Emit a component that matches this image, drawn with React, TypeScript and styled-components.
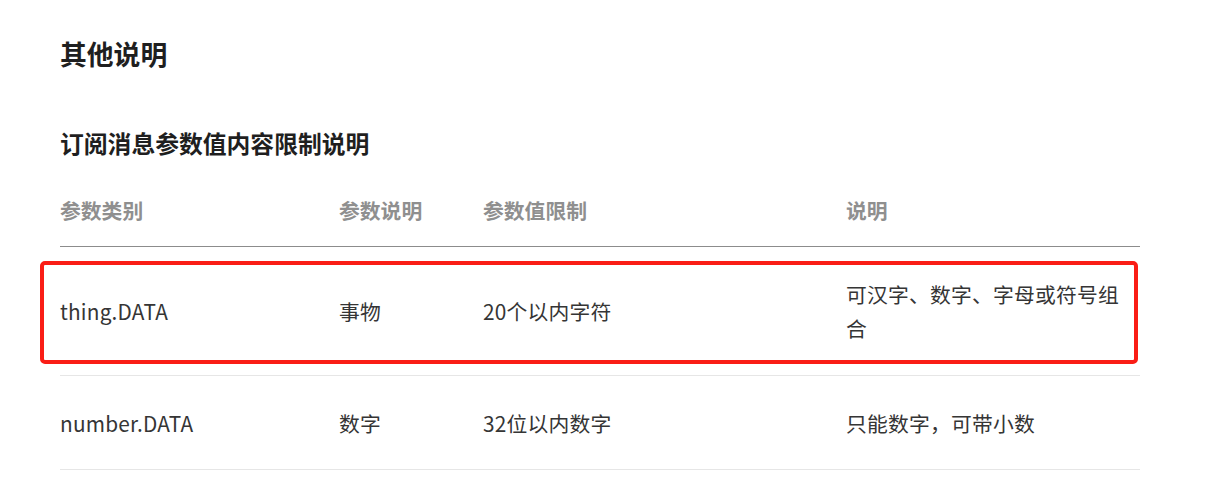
import React from "react";
import styled, { createGlobalStyle } from "styled-components";

const GlobalStyle = createGlobalStyle`
  html, body {
    margin: 0;
    padding: 0;
    background: #ffffff;
  }
  body {
    font-family: "Noto Sans CJK SC", "Noto Sans", sans-serif;
    color: #333333;
  }
`;

const Page = styled.div`
  padding: 36px 70px 0 60px;
  width: 1080px;
`;

const Title = styled.h2`
  margin: 0;
  font-size: 26.8px;
  line-height: 36px;
  font-weight: 700;
  color: #1f1f1f;
`;

const SubTitle = styled.h3`
  margin: 54px 0 0;
  font-size: 23.8px;
  line-height: 34px;
  font-weight: 700;
  color: #1f1f1f;
`;

const Table = styled.div`
  margin-top: 12px;
  display: flex;
  flex-direction: column;
`;

const Row = styled.div<{ $head?: boolean; $highlight?: boolean }>`
  position: relative;
  display: grid;
  grid-template-columns: 279px 144px 363px 294px;
  align-items: center;
  padding: ${(p) => (p.$head ? "22px 0 20px" : "30px 0 29.5px")};
  border-bottom: 1px solid ${(p) => (p.$head ? "#8c8c8c" : "#e6e6e6")};

  &::after {
    content: "";
    display: ${(p) => (p.$highlight ? "block" : "none")};
    position: absolute;
    left: -20px;
    right: 2px;
    top: 14px;
    bottom: 11px;
    border: 4px solid #fa1d16;
    border-radius: 5px;
    pointer-events: none;
  }
`;

const Cell = styled.div<{ $head?: boolean }>`
  font-size: 20.8px;
  line-height: ${(p) => (p.$head ? "32px" : "34px")};
  font-weight: ${(p) => (p.$head ? 700 : 400)};
  color: ${(p) => (p.$head ? "#8f8f8f" : "#353535")};
  letter-spacing: ${(p) => (p.$head ? "0" : "0.2px")};
  padding-right: 8px;
`;

const columns = ["参数类别", "参数说明", "参数值限制", "说明"];

const rows = [
  {
    key: "thing.DATA",
    desc: "事物",
    limit: "20个以内字符",
    note: "可汉字、数字、字母或符号组合",
    highlight: true,
  },
  {
    key: "number.DATA",
    desc: "数字",
    limit: "32位以内数字",
    note: "只能数字，可带小数",
    highlight: false,
  },
];

export default function App() {
  return (
    <>
      <GlobalStyle />
      <Page>
        <Title>其他说明</Title>
        <SubTitle>订阅消息参数值内容限制说明</SubTitle>
        <Table>
          <Row $head>
            {columns.map((c) => (
              <Cell key={c} $head>
                {c}
              </Cell>
            ))}
          </Row>
          {rows.map((r) => (
            <Row key={r.key} $highlight={r.highlight}>
              <Cell>{r.key}</Cell>
              <Cell>{r.desc}</Cell>
              <Cell>{r.limit}</Cell>
              <Cell>{r.note}</Cell>
            </Row>
          ))}
        </Table>
      </Page>
    </>
  );
}
